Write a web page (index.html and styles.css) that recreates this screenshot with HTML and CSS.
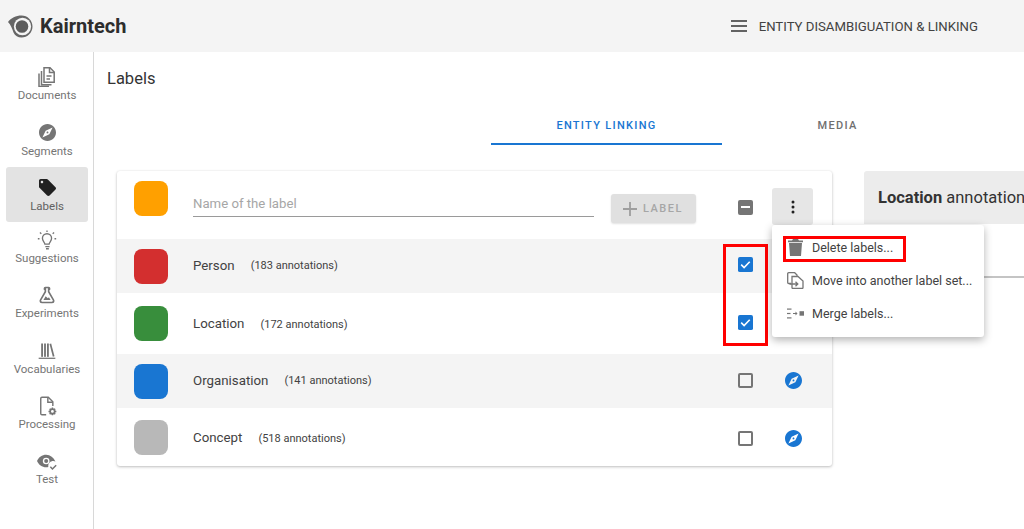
FILE: index.html
```
<!DOCTYPE html>
<html lang="en">
<head>
<meta charset="utf-8">
<title>Kairntech</title>
<link rel="stylesheet" href="styles.css">
</head>
<body>
<svg class="defs" width="0" height="0">
  <symbol id="compass" viewBox="2 2 20 20"><path d="M12 10.9c-.61 0-1.1.49-1.1 1.1s.49 1.1 1.1 1.1c.61 0 1.1-.49 1.1-1.1s-.49-1.1-1.1-1.1zM12 2C6.48 2 2 6.48 2 12s4.48 10 10 10 10-4.48 10-10S17.52 2 12 2zm2.19 12.19L6 18l3.81-8.19L18 6l-3.81 8.19z"/></symbol>
  <symbol id="check" viewBox="0 0 16 16"><rect width="16" height="16" rx="2" fill="#1976d2"/><path d="M3.4 8.2l3.1 3 6-6.2" fill="none" stroke="#fff" stroke-width="1.7"/></symbol>
</svg>
<header class="topbar">
  <div class="brand">
    <svg class="logo" viewBox="0 0 25 23"><path d="M0 7C3 3 8 .5 13.500.5 19.500.5 24.500 5.300 24.500 11.500S19.500 22.500 13.500 22.500C10 22.500 7 21 5.500 17.500 4.300 14 2.800 9.500 0 7z" fill="#666"/><ellipse cx="14.500" cy="11.500" rx="8.600" ry="8.800" fill="#f4f4f4"/><circle cx="14" cy="11.500" r="6.300" fill="#5c5c5c"/></svg>
    <span class="brand-name">Kairntech</span>
  </div>
  <div class="project">
    <svg class="burger" viewBox="0 0 16 12"><path d="M0 1h16M0 6h16M0 11h16" stroke="#333" stroke-width="1.600"/></svg>
    <span>ENTITY DISAMBIGUATION &amp; LINKING</span>
  </div>
</header>
<div class="body-row">
  <nav class="sidebar">
    <a class="nav-item">
      <svg class="nav-icon" viewBox="0 0 20 20" fill="none" stroke="#757575" stroke-width="1.500"><path d="M7 .8h6l4.200 4.200v10.200H7z"/><path d="M12.500 .8v4.700h4.700M9.500 9h5M9.500 12h3.500"/><path d="M4.500 4v13.700h10M2 6.500v13h10"/></svg>
      <span>Documents</span>
    </a>
    <a class="nav-item">
      <svg class="nav-icon icon-small"><use href="#compass"/></svg>
      <span>Segments</span>
    </a>
    <a class="nav-item active">
      <svg class="nav-icon icon-tag" viewBox="2 2 20 20"><path d="M21.410 11.580l-9-9C12.050 2.220 11.550 2 11 2H4c-1.100 0-2 .9-2 2v7c0 .55.22 1.050.59 1.420l9 9c.36.36.86.58 1.410.58.55 0 1.050-.22 1.410-.59l7-7c.37-.36.59-.86.59-1.410 0-.55-.23-1.060-.59-1.420zM5.500 7C4.670 7 4 6.330 4 5.500S4.670 4 5.500 4 7 4.670 7 5.500 6.330 7 5.500 7z"/></svg>
      <span>Labels</span>
    </a>
    <a class="nav-item nudge-up">
      <svg class="nav-icon" viewBox="0 0 24 24" fill="none" stroke="#757575" stroke-width="1.600"><path d="M9.500 17c0-2-3-3.500-3-7a5.500 5.500 0 0 1 11 0c0 3.500-3 5-3 7z"/><path d="M10 20h5M10.800 22.500h3.400M12 .5v2M3.500 3l1.700 1.500M20.500 3l-1.700 1.500M1 10.500h2M21 10.500h2"/></svg>
      <span>Suggestions</span>
    </a>
    <a class="nav-item nudge-up">
      <svg class="nav-icon" viewBox="0 0 24 24"><path fill="#757575" d="M5,19A1,1 0 0,0 6,20H18A1,1 0 0,0 19,19C19,18.790 18.930,18.590 18.820,18.430L13,8.350V4H11V8.350L5.180,18.430C5.070,18.590 5,18.790 5,19M6,22A3,3 0 0,1 3,19C3,18.400 3.180,17.840 3.500,17.370L9,7.810V6A1,1 0 0,1 8,5V4A2,2 0 0,1 10,2H14A2,2 0 0,1 16,4V5A1,1 0 0,1 15,6V7.810L20.500,17.370C20.820,17.840 21,18.400 21,19A3,3 0 0,1 18,22H6M13,16L14.340,14.660L16.270,18H7.730L10.390,13.390L13,16Z"/></svg>
      <span>Experiments</span>
    </a>
    <a class="nav-item nudge-up">
      <svg class="nav-icon" viewBox="0 0 24 24" fill="#757575"><rect x="5" y="3" width="2.200" height="16"/><rect x="8.500" y="3" width="2.200" height="16"/><rect x="12" y="3" width="2.200" height="16"/><path d="M15 3.500l2-.6 4 15.500-2 .6z"/><rect x="2" y="20" width="20" height="1.500"/></svg>
      <span>Vocabularies</span>
    </a>
    <a class="nav-item nudge-up">
      <svg class="nav-icon" viewBox="0 0 24 24"><path fill="none" stroke="#757575" stroke-width="1.700" d="M11 22.500H6a1.500 1.500 0 0 1-1.500-1.500V3A1.500 1.500 0 0 1 6 1.500h7.500L19 7v5"/><path fill="none" stroke="#757575" stroke-width="1.700" d="M13 1.500V7.500h6"/><circle cx="18.500" cy="18.500" r="2.700" fill="none" stroke="#757575" stroke-width="2"/><path stroke="#757575" stroke-width="1.800" d="M18.500 13.800v2M18.500 21.200v2M13.800 18.500h2M21.200 18.500h2M15.200 15.200l1.300 1.300M20.500 20.500l1.300 1.300M21.800 15.200l-1.300 1.300M16.500 20.500l-1.300 1.300"/></svg>
      <span>Processing</span>
    </a>
    <a class="nav-item nudge-up">
      <svg class="nav-icon" viewBox="0 0 24 24"><path fill="#757575" d="M11 4.500C6 4.500 2 7.500 0 12c2 4.500 6 7.500 11 7.500.9 0 1.800-.1 2.600-.3-.1-.5-.1-.8-.1-1.200 0-3.300 2.700-6 6-6 1 0 1.900.2 2.700.7C20 8 16 4.500 11 4.500z"/><circle cx="11" cy="12" r="4" fill="#fff"/><circle cx="11" cy="12" r="2.400" fill="#757575"/><path d="M16 19l2.500 2.500L23 17" fill="none" stroke="#757575" stroke-width="1.800"/></svg>
      <span>Test</span>
    </a>
  </nav>
  <main class="main">
    <h1 class="page-title">Labels</h1>
    <div class="tabs">
      <div class="tab tab-active">ENTITY LINKING</div>
      <div class="tab">MEDIA</div>
    </div>
    <div class="columns">
      <section class="card label-card">
        <div class="row row-head">
          <span class="swatch orange"></span>
          <div class="name-field">Name of the label</div>
          <div class="add-btn"><svg class="plus" viewBox="0 0 14 14"><path d="M7 0v14M0 7h14" stroke="#9e9e9e" stroke-width="1.800"/></svg>LABEL</div>
          <span class="cell-check"><span class="box-minus"></span></span>
          <span class="cell-action"><span class="more-btn"><svg class="dots" viewBox="0 0 4 14"><circle cx="2" cy="2" r="1.500"/><circle cx="2" cy="7" r="1.500"/><circle cx="2" cy="12" r="1.500"/></svg></span></span>
        </div>
        <div class="row row-person shaded">
          <span class="swatch red"></span>
          <span class="row-name">Person</span><span class="count">(183 annotations)</span>
          <span class="cell-check"><svg class="box"><use href="#check"/></svg></span>
          <span class="cell-action"></span>
        </div>
        <div class="row row-location">
          <span class="swatch green"></span>
          <span class="row-name">Location</span><span class="count">(172 annotations)</span>
          <span class="cell-check"><svg class="box"><use href="#check"/></svg></span>
          <span class="cell-action"></span>
        </div>
        <div class="row row-org shaded">
          <span class="swatch blue"></span>
          <span class="row-name">Organisation</span><span class="count">(141 annotations)</span>
          <span class="cell-check"><span class="box-empty"></span></span>
          <span class="cell-action"><svg class="compass"><use href="#compass"/></svg></span>
        </div>
        <div class="row row-concept">
          <span class="swatch grey"></span>
          <span class="row-name">Concept</span><span class="count">(518 annotations)</span>
          <span class="cell-check"><span class="box-empty"></span></span>
          <span class="cell-action"><svg class="compass"><use href="#compass"/></svg></span>
        </div>
        <div class="mark mark-checks"></div>
      </section>
      <section class="side-card">
        <div class="side-head"><b>Location</b> annotation</div>
        <div class="side-line"></div>
      </section>
    </div>
    <div class="menu">
      <div class="menu-item">
        <svg class="menu-icon" viewBox="0 0 17 17"><path fill="#757575" d="M6 0h5l1 1.500h4v1.700H1V1.500h4zM2 4h13l-1 13H3z"/></svg>
        <span>Delete labels...</span>
      </div>
      <div class="menu-item">
        <svg class="menu-icon" viewBox="0 0 17 17" fill="none" stroke="#757575" stroke-width="1.300"><path d="M4 11.500H1.700a1 1 0 0 1-1-1V1.700a1 1 0 0 1 1-1h6l2.300 2.300v1"/><path d="M5 4.500h6l5 4.500v6.500a1 1 0 0 1-1 1H6a1 1 0 0 1-1-1z"/><path d="M2.500 12h8M8.500 9.800l2.300 2.200-2.300 2.200"/></svg>
        <span>Move into another label set...</span>
      </div>
      <div class="menu-item">
        <svg class="menu-icon" viewBox="0 0 17 17" fill="#757575"><rect x="0" y="3.500" width="4.500" height="1.200"/><rect x="0" y="7.900" width="3.500" height="1.200"/><rect x="0" y="12.300" width="4.500" height="1.200"/><rect x="6" y="8" width="3.500" height="1"/><path d="M8.500 6.500l2 2-2 2z"/><rect x="12.500" y="6.200" width="4.500" height="4.500"/></svg>
        <span>Merge labels...</span>
      </div>
      <div class="mark mark-delete"></div>
    </div>
  </main>
</div>
</body>
</html>
```
FILE: styles.css
```
* { box-sizing: border-box; }
html, body { margin: 0; height: 529px; overflow: hidden; }
body { font-family: Roboto, "Liberation Sans", sans-serif; color: #333; background: #fff; }
.defs { position: absolute; }

.topbar { height: 52px; background: #f4f4f4; display: flex; align-items: center; justify-content: space-between; padding: 0 46px 0 8px; }
.brand { display: flex; align-items: center; gap: 7px; }
.logo { width: 25px; height: 23px; }
.brand-name { font-size: 20px; font-weight: 700; color: #2d2d2d; }
.project { display: flex; align-items: center; gap: 12px; font-size: 13.200px; color: #424242; }
.burger { width: 16px; height: 12px; }

.body-row { display: flex; height: 477px; }
.sidebar { width: 94px; flex: none; border-right: 1px solid #d8d8d8; padding: 5px 5px 0 6px; }
.nav-item { display: flex; flex-direction: column; align-items: center; height: 55px; padding-top: 10px; border-radius: 3px; font-size: 11.500px; line-height: 14px; color: #757575; }
.nav-item.active { background: #e3e3e3; color: #616161; }
.nudge-up { position: relative; top: -2px; height: 55.300px; }
.nav-icon { width: 20px; height: 20px; margin-bottom: 1px; flex: none; }
.icon-small { width: 17px; height: 17px; margin: 2px 0 3px; fill: #757575; }
.icon-tag { width: 17px; height: 17px; margin: 2px 0 3px; fill: #212121; }

.main { flex: 1; min-width: 0; position: relative; }
.page-title { margin: 0; padding: 17px 0 0 13px; height: 50px; font-size: 16.500px; line-height: 20px; font-weight: 400; color: #333; }
.tabs { display: flex; margin-left: 397px; height: 43px; }
.tab { width: 231px; padding-top: 17px; text-align: center; font-size: 11px; line-height: 13px; font-weight: 500; letter-spacing: 1.300px; color: #6f6f6f; }
.tab-active { color: #1976d2; border-bottom: 2px solid #1976d2; }

.columns { display: flex; gap: 32px; margin: 26px 0 0 23px; width: 1000px; }
.card { background: #fff; border-radius: 3px; box-shadow: 0 1px 3px rgba(0,0,0,.25), 0 0 2px rgba(0,0,0,.06); flex: none; }
.label-card { width: 715px; height: 295px; position: relative; }
.row { display: flex; align-items: center; padding-left: 17px; font-size: 13px; color: #424242; }
.shaded { background: #f4f4f4; }
.row-head { height: 68px; align-items: flex-start; }
.row-person { height: 54px; }
.row-location { height: 61px; }
.row-org { height: 54px; }
.row-concept { height: 58px; }
.swatch { width: 34px; height: 35px; border-radius: 8px; flex: none; margin-right: 25px; }
.row-head .swatch { margin-top: 10px; }
.row-concept .swatch { margin-top: 1px; }
.orange { background: #ffa000; }
.red { background: #d32f2f; }
.green { background: #388e3c; }
.blue { background: #1976d2; }
.grey { background: #b8b8b8; }
.name-field { width: 401px; height: 36px; margin-top: 10px; padding-top: 15px; font-size: 13.200px; line-height: 16px; color: #a6a6a6; border-bottom: 1px solid #9a9a9a; }
.add-btn { display: flex; align-items: center; gap: 6px; width: 85px; height: 29px; margin: 23px 0 0 17px; padding-left: 12px; border-radius: 3px; background: #e0e0e0; box-shadow: 0 1px 2px rgba(0,0,0,.12); font-size: 11px; font-weight: 500; letter-spacing: 1.500px; color: #a6a6a6; }
.plus { width: 14px; height: 14px; }
.row-name { font-size: 13.300px; margin-top: -1px; }
.count { font-size: 11px; margin-left: 16px; margin-top: -1px; }
.row-location .row-name { margin-top: -1px; }
.row-location .count { margin-top: 1px; }
.row-concept .row-name { margin-top: 1px; }
.row-concept .count { margin-top: 3px; }
.row .cell-check { position: absolute; left: 621px; width: 15px; height: 15px; }
.row-head .cell-check { top: 29px; }
.row-person .cell-check { top: 86px; }
.row-location .cell-check { top: 144px; }
.row-org .cell-check { top: 202px; }
.row-concept .cell-check { top: 260px; }
.row .cell-action { position: absolute; left: 655px; }
.row-head .cell-action { top: 17px; }
.row-org .cell-action { top: 201px; left: 668px; }
.row-concept .cell-action { top: 259px; left: 668px; }
.box { display: block; width: 15px; height: 15px; }
.box-minus { display: block; width: 15px; height: 15px; border-radius: 2px; background: #757575; position: relative; }
.box-minus::after { content: ""; position: absolute; left: 3px; right: 3px; top: 6px; height: 2px; background: #fff; }
.box-empty { display: block; width: 15px; height: 15px; border: 2px solid #757575; border-radius: 2px; }
.more-btn { display: flex; align-items: center; justify-content: center; width: 41px; height: 37px; border-radius: 3px; background: #e6e6e6; }
.dots { width: 4px; height: 14px; fill: #212121; }
.compass { display: block; width: 17px; height: 17px; fill: #1976d2; }

.side-card { width: 300px; flex: none; }
.side-head { height: 53px; background: #ececec; border-radius: 3px 3px 0 0; padding: 17px 14px 0; font-size: 16.500px; line-height: 20px; color: #333; white-space: nowrap; }
.side-head b { font-weight: 700; }
.side-line { height: 2px; margin-top: 52px; background: #c4c4c4; }

.menu { position: absolute; left: 678px; top: 173px; width: 212px; height: 112px; padding-top: 6px; background: #fff; border-radius: 3px; box-shadow: 0 3px 8px rgba(0,0,0,.3); }
.menu-item { display: flex; align-items: center; gap: 8px; height: 33px; padding-left: 15px; font-size: 12.500px; color: #424242; white-space: nowrap; }
.menu-icon { width: 17px; height: 17px; flex: none; }
.mark { position: absolute; border: 3px solid #f00; pointer-events: none; }
.mark-checks { left: 606px; top: 73px; width: 45px; height: 102px; }
.mark-delete { left: 11px; top: 11px; width: 123px; height: 26px; }
```
